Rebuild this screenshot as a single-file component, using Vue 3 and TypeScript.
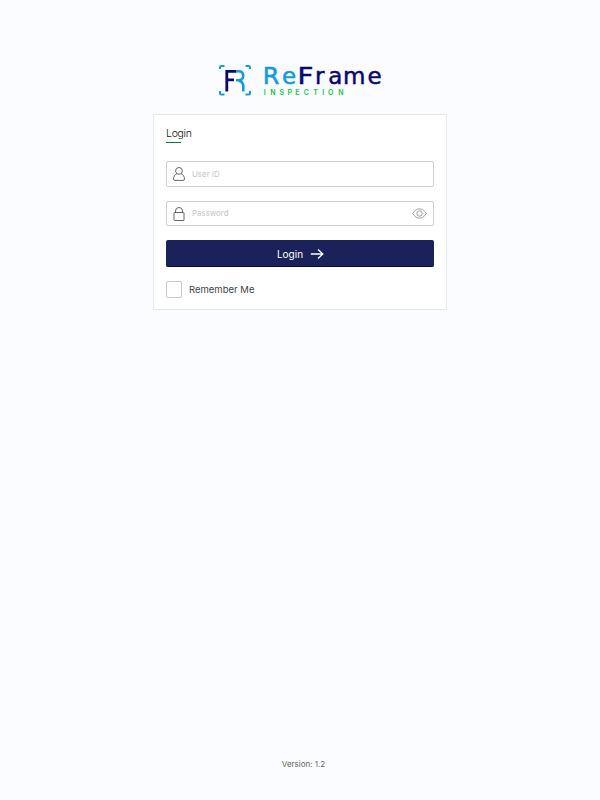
<script setup lang="ts">
import { ref } from 'vue'

const userId = ref('')
const password = ref('')
const showPassword = ref(false)
const remember = ref(false)
const version = '1.2'
</script>

<template>
  <main class="page">
    <svg class="logo" viewBox="0 0 166 34" role="img" aria-label="ReFrame Inspection">
      <g fill="none" stroke-width="2">
        <path d="M3 6V4.500Q3 3 4.500 3H7.500M28.500 3h3Q33 3 33 4.500V6M3 28v2Q3 31.500 4.500 31.500H7.500M28.500 31.500h3Q33 31.500 33 30V28" stroke="#149bd7" />
        <path d="M9.800 28.500V8.300H19.500M9.500 16.800H17" stroke="#08086f" stroke-width="2.800" />
        <path d="M19.500 8.300h2q4.700 0 4.700 4.500 0 4.500-4.700 4.500H19M21 17.300q5.300 1.200 5.300 6v5.200" stroke="#149bd7" stroke-width="2.600" />
      </g>
      <text class="word blue" transform="translate(45.700 20.700) scale(1.040 1)">R</text>
      <text class="word blue" x="65" y="20.700">e</text>
      <text class="word navy" transform="translate(80.400 20.700) scale(1.200 1)">F</text>
      <text class="word navy" x="98 111.300 126 150.400" y="20.700">rame</text>
      <text class="tagline" x="46.700 53.200 62.500 70.400 78.200 86.700 96.300 105.300 111.100 121.300" y="32.200">INSPECTION</text>
    </svg>

    <form class="card" @submit.prevent>
      <h1 class="title">Login</h1>

      <label class="field">
        <svg class="lead" viewBox="0 0 14 16">
          <circle cx="7" cy="4.900" r="3.400" />
          <path d="M4.800 7.800C2.700 8.700 1.500 10.700 1.500 13q0 1.400 1.400 1.400h8.200q1.400 0 1.400-1.400c0-2.300-1.200-4.300-3.300-5.200" />
        </svg>
        <input v-model="userId" type="text" placeholder="User ID" />
      </label>

      <label class="field password">
        <svg class="lead" viewBox="0 0 14 16">
          <rect x="2" y="6.500" width="10" height="8" rx=".5" />
          <path d="M3.500 6.500V5a3.500 3.500 0 0 1 7 0v1.500" />
        </svg>
        <input v-model="password" :type="showPassword ? 'text' : 'password'" placeholder="Password" />
        <svg class="eye" viewBox="0 0 15 11" @click="showPassword = !showPassword">
          <path d="M.8 5.500C4.200-.7 10.800-.7 14.200 5.500 10.800 11.700 4.200 11.700.8 5.500Z" />
          <circle cx="7.500" cy="5.500" r="2.700" />
        </svg>
      </label>

      <button class="submit" type="submit">
        <span>Login</span>
        <svg viewBox="0 0 14 12"><path d="M.8 6h12M8 1.500 12.800 6 8 10.500" /></svg>
      </button>

      <label class="remember">
        <input v-model="remember" type="checkbox" />
        <span>Remember Me</span>
      </label>
    </form>

    <footer class="version">Version: {{ version }}</footer>
  </main>
</template>

<style>
body {
  margin: 0;
  background: #fafcff;
}
</style>

<style scoped>
.page {
  box-sizing: border-box;
  height: 800px;
  padding: 63px 0 30px;
  display: flex;
  flex-direction: column;
  align-items: center;
  background: #fafcff;
  font-family: Inter, "Liberation Sans", sans-serif;
}
.logo {
  width: 166px;
  height: 34px;
  flex: none;
  overflow: visible;
}
.word {
  font: 23px "DejaVu Sans", sans-serif;
  stroke-width: .5px;
}
.blue { fill: #149bd7; stroke: #149bd7; }
.navy { fill: #08086f; stroke: #08086f; }
.tagline {
  font: 600 7px Inter, sans-serif;
  fill: #0cc83e;
}
.card {
  box-sizing: border-box;
  width: 294px;
  height: 196px;
  margin-top: 17px;
  padding: 12px 12px 0;
  display: flex;
  flex-direction: column;
  background: #fff;
  border: 1px solid #e6e9ec;
}
.title {
  box-sizing: border-box;
  width: 15px;
  height: 16px;
  margin: 0 0 18px;
  white-space: nowrap;
  font-size: 10.500px;
  letter-spacing: -.3px;
  line-height: 13px;
  font-weight: 300;
  color: #111;
  border-bottom: 1px solid #067a43;
}
.field {
  box-sizing: border-box;
  height: 26px;
  margin-bottom: 14px;
  padding: 0 6px 0 5px;
  display: flex;
  align-items: center;
  border: 1px solid #d0d0d0;
  border-radius: 2px;
}
.field.password { height: 25px; }
.field svg {
  flex: none;
  fill: none;
  stroke: #555;
  stroke-width: .9;
}
.lead { width: 14px; height: 16px; }
.field .eye { width: 15px; height: 11px; stroke: #888; stroke-width: .8; }
.field input {
  flex: 1;
  min-width: 0;
  padding: 0;
  margin-left: 6px;
  border: 0;
  outline: 0;
  background: none;
  font: 7.900px Inter, sans-serif;
  color: #333;
}
.password input { padding-bottom: 1px; }
.field input::placeholder { color: #c5c5c8; }
.submit {
  height: 27px;
  padding: 1px 0 0 1px;
  margin: 0 0 14px;
  display: flex;
  align-items: center;
  justify-content: center;
  gap: 7px;
  border: 0;
  border-bottom: 1px solid #080b43;
  border-radius: 2px;
  background: #1b2159;
  color: #fff;
  font: 10px Inter, sans-serif;
}
.submit svg {
  width: 14px;
  height: 12px;
  fill: none;
  stroke: #fff;
  stroke-width: 1.300;
}
.remember {
  height: 17px;
  display: flex;
  align-items: center;
  gap: 7px;
  font-size: 9.500px;
  line-height: 15px;
  color: #444;
}
.remember span { padding-bottom: 1px; }
.remember input {
  appearance: none;
  box-sizing: border-box;
  width: 16px;
  height: 17px;
  margin: 0;
  border: 1px solid #c8c8c8;
  border-radius: 2px;
  background: #fff;
}
.remember input:checked { background: #1b2159; }
.version {
  margin-top: auto;
  padding-left: 7px;
  font-size: 8px;
  line-height: 12px;
  color: #666;
}
</style>
